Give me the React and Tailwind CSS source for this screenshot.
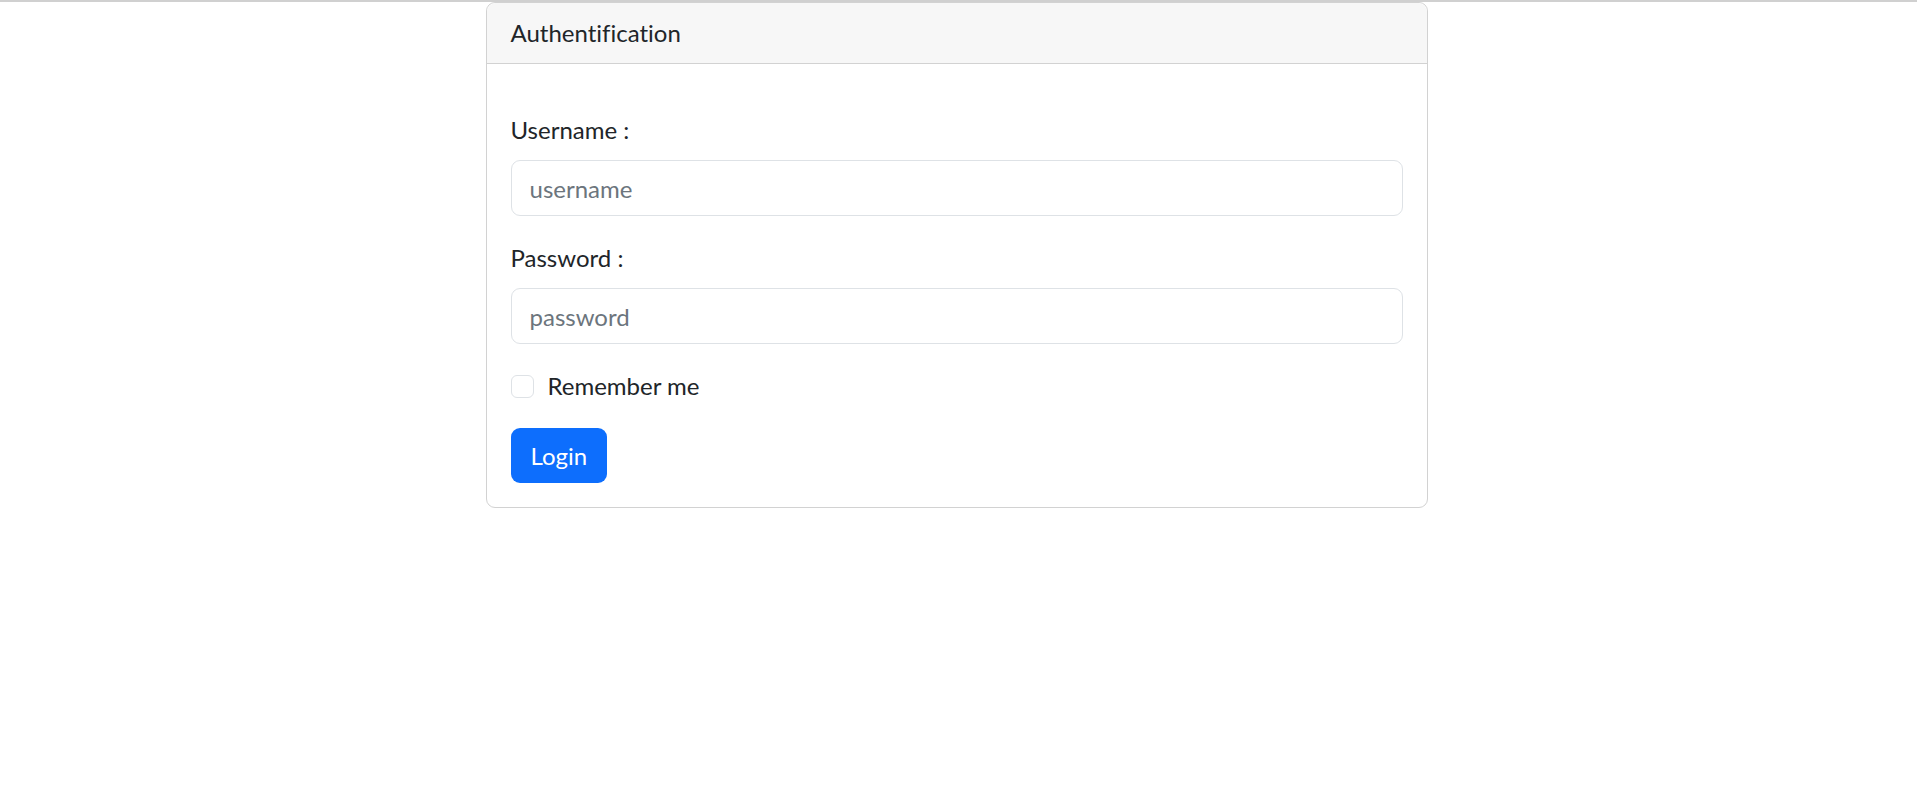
import React from "react";

function Field({ label, type = "text", placeholder }) {
  return (
    <div className="mb-6">
      <label className="mb-3 block leading-9">{label}</label>
      <input
        type={type}
        placeholder={placeholder}
        className="block h-[56px] w-full rounded-[9px] border border-[#dee2e6] bg-white px-[18px] text-[24px] text-[#212529] outline-none placeholder:text-[#6c757d]"
      />
    </div>
  );
}

export default function App() {
  return (
    <div className="min-h-[790px] bg-white font-['Lato',sans-serif] text-[24px] text-[#212529] [font-variant-ligatures:none]">
      <div className="h-[2px] bg-[#d0d0d0]" />
      <div className="mx-auto w-[942px] -translate-x-[2px] rounded-[9px] border border-[#d2d2d2] bg-white">
        <div className="rounded-t-[9px] border-b border-[#d2d2d2] bg-[#f7f7f7] px-6 py-3 leading-9">
          Authentification
        </div>
        <div className="p-6">
          <div className="mt-6">
            <Field label="Username :" placeholder="username" />
            <Field label="Password :" type="password" placeholder="password" />
            <div className="mb-6 flex h-9 items-center gap-[14px]">
              <span className="h-[23px] w-[23px] rounded-[6px] border border-[#dee2e6] bg-white" />
              <span className="leading-9">Remember me</span>
            </div>
            <button
              type="button"
              className="h-[55px] rounded-[9px] bg-[#0d6efd] px-5 text-[24px] leading-9 text-white"
            >
              Login
            </button>
          </div>
        </div>
      </div>
    </div>
  );
}
